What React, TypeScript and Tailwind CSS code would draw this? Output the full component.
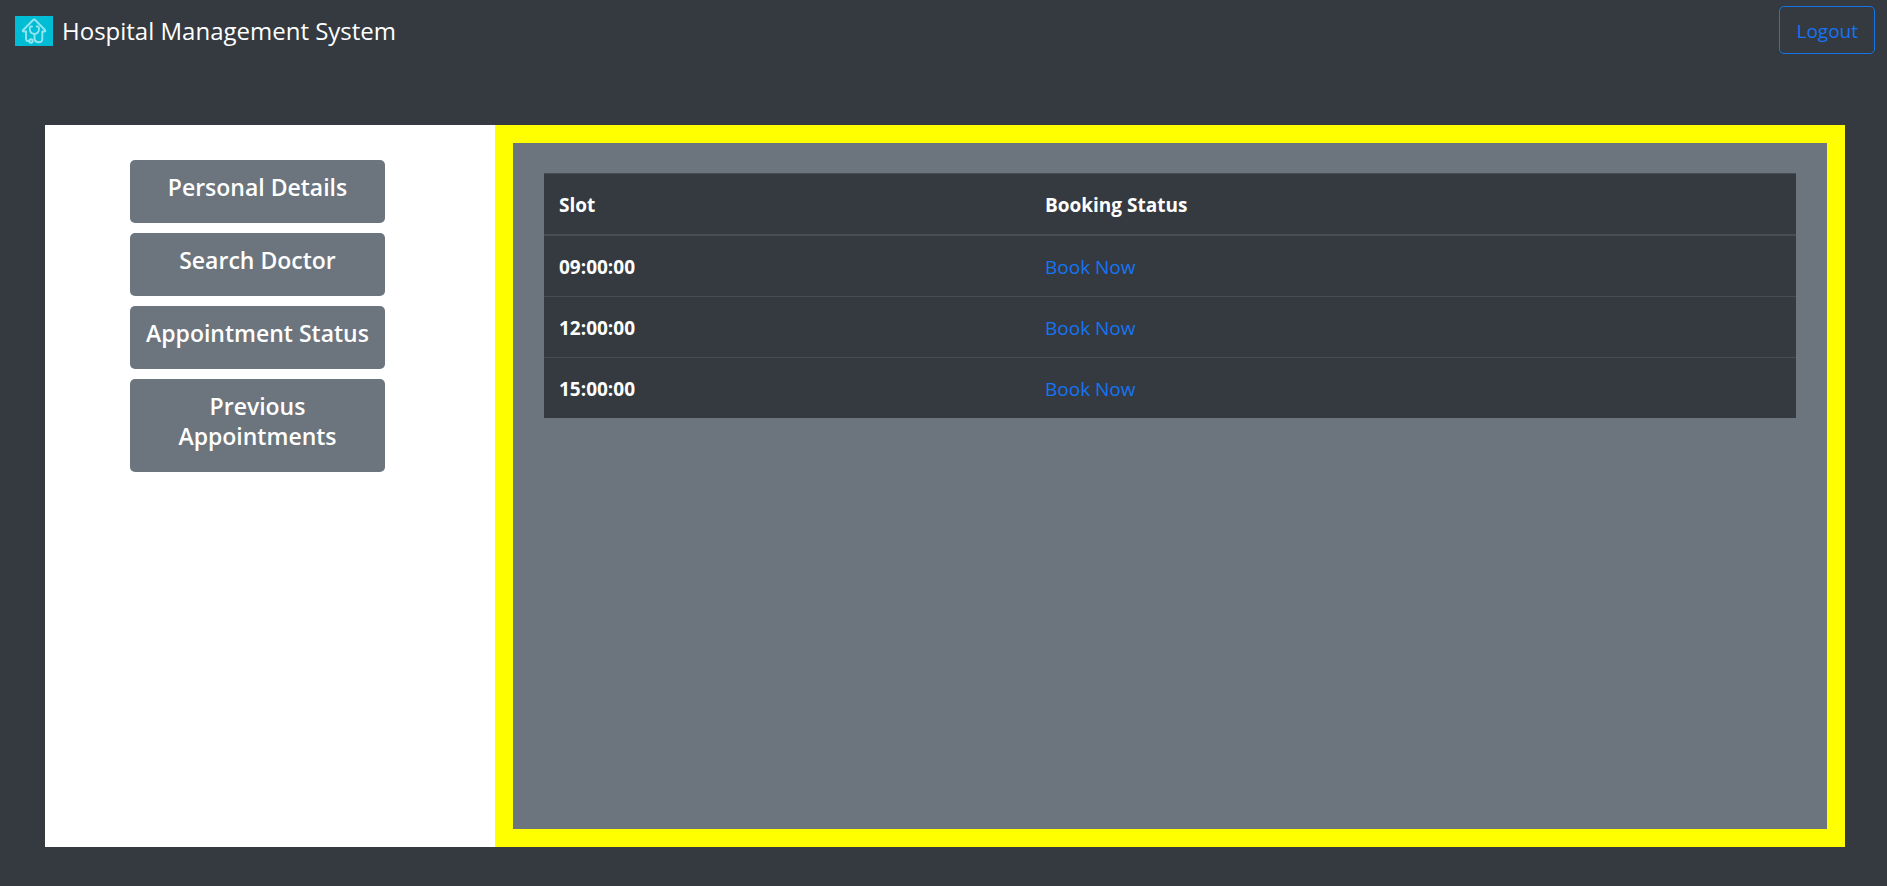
const navItems = ["Personal Details", "Search Doctor", "Appointment Status", "Previous Appointments"];
const slots = ["09:00:00", "12:00:00", "15:00:00"];

function Logo() {
  return (
    <svg viewBox="0 0 38 30" className="h-[30px] w-[38px]" aria-hidden="true">
      <rect width="38" height="30" fill="#00bcd4" />
      <g fill="none" stroke="#8fe6ef" strokeWidth="1.9" strokeLinecap="round" strokeLinejoin="round">
        <path d="M11 15.500H8.300Q7.300 15 8.200 14L18.200 4Q19.200 3 20.200 4L30 14Q31 15.200 29.500 15.500H27.300V23.500Q27 26.300 24 26.300Q20 26.300 19.500 23V18.500" />
        <path d="M11 15.500V23.500Q11.500 25.500 13.800 25" />
        <path d="M17 10.500H15.500Q14.600 11 14.700 13Q15 17.500 19.300 18Q23.800 17.500 24 13Q24.100 11 23.200 10.500H21.700" />
        <circle cx="16" cy="25" r="1.700" />
      </g>
    </svg>
  );
}

export default function App() {
  return (
    <div className="flex min-h-screen flex-col bg-[#343a40] font-['Open_Sans','Noto_Sans',sans-serif] text-[19px] leading-[30px] text-white">
      <header className="flex items-center justify-between pt-[6px] pr-3 pl-[15px]">
        <a href="#" className="flex items-center gap-[9px] pt-[2px] text-[24px]">
          <Logo />
          Hospital Management System
        </a>
        <button type="button" className="h-12 rounded-[5px] border border-[#1276e6] px-4 pt-[2px] text-[#1474f5]">
          Logout
        </button>
      </header>
      <main className="mt-[71px] mr-[42px] mb-[39px] ml-[45px] flex grow">
        <nav className="flex w-1/4 flex-col gap-[10px] bg-white pt-[35px] pr-[110px] pl-[85px]">
          {navItems.map((item) => (
            <button key={item} type="button" className="rounded-[5px] bg-[#6c757d] px-3 pt-3 pb-[21px] text-[23px] leading-[30px] font-semibold">
              {item}
            </button>
          ))}
        </nav>
        <section className="w-3/4 border-[18px] border-[#ffff00] bg-[#6c757d] px-[31px] pt-[30px]">
          <table className="w-full table-fixed border-separate border-spacing-0 bg-[#343a40] text-left">
            <thead>
              <tr>
                <th scope="col" className="w-[486px] border-t border-b-2 border-[#454d55] px-[15px] pt-4 pb-[14px] font-bold">Slot</th>
                <th scope="col" className="border-t border-b-2 border-[#454d55] px-[15px] pt-4 pb-[14px] font-bold">Booking Status</th>
              </tr>
            </thead>
            <tbody className="[&>tr+tr>*]:border-t [&>tr+tr>*]:border-[#454d55]">
              {slots.map((slot) => (
                <tr key={slot}>
                  <th scope="row" className="px-[15px] pt-4 pb-[14px] font-bold">{slot}</th>
                  <td className="px-[15px] pt-4 pb-[14px]">
                    <a href="#" className="text-[#1474f5]">Book Now</a>
                  </td>
                </tr>
              ))}
            </tbody>
          </table>
        </section>
      </main>
    </div>
  );
}
